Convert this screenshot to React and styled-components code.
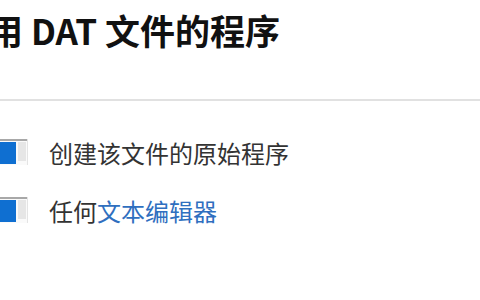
import React from "react";
import styled, { createGlobalStyle } from "styled-components";

const GlobalStyle = createGlobalStyle`
  body {
    margin: 0;
    background: #fff;
    font-family: "Microsoft YaHei", "Noto Sans CJK SC", "Noto Sans", sans-serif;
    overflow: hidden;
  }
`;

const Page = styled.div`
  width: 480px;
  height: 300px;
  overflow: hidden;
  display: flex;
  flex-direction: column;
`;

const Header = styled.div`
  height: 101px;
  border-bottom: 2px solid #e1e1e1;
  box-sizing: border-box;
  padding-top: 5px;
`;

const Title = styled.h2`
  margin: 0 0 0 -12px;
  font-size: 35px;
  line-height: 50px;
  font-weight: 700;
  color: #111;
  white-space: nowrap;
`;

const List = styled.ul`
  list-style: none;
  margin: 0;
  padding: 34px 0 0 0;
  display: flex;
  flex-direction: column;
  gap: 24px;
`;

const Row = styled.li`
  display: flex;
  align-items: center;
  gap: 21px;
  height: 34px;
  font-size: 24px;
  color: #333;
`;

const Link = styled.a`
  color: #2f6fbf;
  text-decoration: none;
`;

const AppIcon = () => (
  <svg width="28" height="26" viewBox="0 0 28 26">
    <rect x="0" y="0" width="28" height="26" fill="#fafafa" />
    <rect x="0" y="0" width="28" height="2" fill="#a8a8a8" />
    <rect x="27" y="0" width="1" height="26" fill="#e4e4e4" />
    <rect x="0" y="3" width="16" height="22" fill="#0f6fd1" />
    <rect x="18" y="3" width="8" height="19" fill="#e6e6e6" />
  </svg>
);

export default function App() {
  return (
    <>
      <GlobalStyle />
      <Page>
        <Header>
          <Title>用 DAT 文件的程序</Title>
        </Header>
        <List>
          <Row>
            <AppIcon />
            <span>创建该文件的原始程序</span>
          </Row>
          <Row>
            <AppIcon />
            <span>
              任何<Link href="#">文本编辑器</Link>
            </span>
          </Row>
        </List>
      </Page>
    </>
  );
}
